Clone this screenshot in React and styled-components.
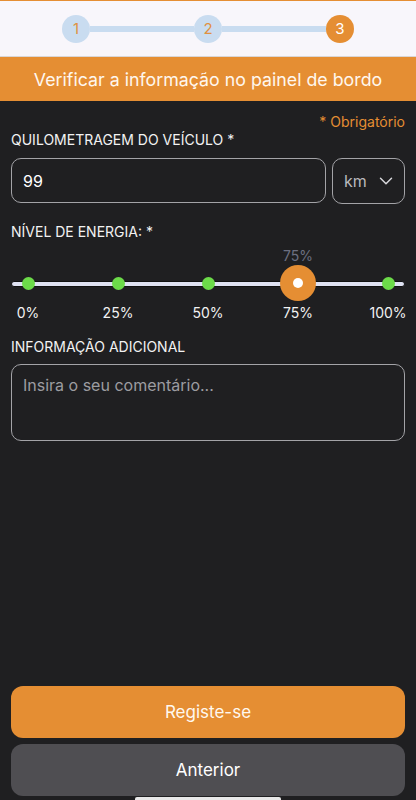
import React from 'react';
import styled, { createGlobalStyle } from 'styled-components';
import { ChevronDown } from 'lucide-react';

const GlobalStyle = createGlobalStyle`
  * { box-sizing: border-box; }
  body {
    margin: 0;
    background: #1f1f21;
    font-family: Inter, 'Noto Sans', sans-serif;
  }
`;

const ORANGE = '#e58e33';

const Page = styled.div`
  position: relative;
  min-height: 800px;
  display: flex;
  flex-direction: column;
  background: #1f1f21;
  color: #f4f4f4;
`;

const Stepper = styled.div`
  height: 57px;
  display: flex;
  align-items: center;
  padding: 0 62px;
  background: #f8f6fb;
  border-top: 1px solid ${ORANGE};
  border-bottom: 1px solid #d9d6d6;
`;

const StepDot = styled.div`
  width: 28px;
  height: 28px;
  border-radius: 50%;
  flex-shrink: 0;
  display: flex;
  align-items: center;
  justify-content: center;
  font-size: 15px;
  background: ${(p) => (p.$active ? ORANGE : '#c9dcf0')};
  color: ${(p) => (p.$active ? '#ffffff' : '#e09140')};
`;

const Connector = styled.div`
  flex: 1;
  height: 6px;
  background: #c9dcf0;
`;

const Banner = styled.div`
  height: 44px;
  display: flex;
  align-items: center;
  justify-content: center;
  background: ${ORANGE};
  color: #fff7ee;
  font-size: 17.8px;
`;

const Form = styled.div`
  flex: 1;
  display: flex;
  flex-direction: column;
  padding: 12px 11px 0;
`;

const Required = styled.div`
  align-self: flex-end;
  color: ${ORANGE};
  font-size: 14px;
  line-height: 18px;
`;

const Label = styled.div`
  font-size: 14px;
  line-height: 18px;
  color: #f2f2f2;
  margin-top: ${(p) => p.$mt || 0}px;
`;

const Row = styled.div`
  display: flex;
  gap: 6px;
  margin-top: 9px;
`;

const Field = styled.div`
  flex: 1;
  height: 45px;
  border: 1.5px solid #a3a3a7;
  border-radius: 10px;
  display: flex;
  align-items: center;
  padding: 0 11px;
  font-size: 16px;
  color: #ffffff;
`;

const Select = styled.div`
  width: 73px;
  height: 46px;
  border: 1.5px solid #a3a3a7;
  border-radius: 10px;
  display: flex;
  align-items: center;
  justify-content: space-between;
  padding: 0 7px 0 11px;
  font-size: 16px;
  color: #b9b9bd;
`;

const Slider = styled.div`
  position: relative;
  margin-top: 6px;
`;

const Track = styled.div`
  position: absolute;
  left: 0;
  right: 0;
  top: 34px;
  height: 6px;
  border-radius: 3px;
  background: #dfe2f2;
  border: 1px solid #111;
`;

const Ticks = styled.div`
  position: relative;
  display: flex;
  justify-content: space-between;
`;

const Tick = styled.div`
  width: 34px;
  display: flex;
  flex-direction: column;
  align-items: center;
`;

const Value = styled.div`
  height: 18px;
  line-height: 18px;
  font-size: 14px;
  color: #6c6f80;
  white-space: nowrap;
`;

const DotArea = styled.div`
  height: 36px;
  display: flex;
  align-items: center;
  justify-content: center;
`;

const Dot = styled.div`
  width: 13px;
  height: 13px;
  border-radius: 50%;
  background: #6cdb49;
`;

const Thumb = styled.div`
  width: 36px;
  height: 36px;
  border-radius: 50%;
  background: ${ORANGE};
  display: flex;
  align-items: center;
  justify-content: center;

  &::after {
    content: '';
    width: 10px;
    height: 10px;
    border-radius: 50%;
    background: #ffffff;
  }
`;

const TickLabel = styled.div`
  margin-top: 3px;
  font-size: 14px;
  line-height: 18px;
  color: #f2f2f2;
  white-space: nowrap;
`;

const TextArea = styled.div`
  margin-top: 8px;
  height: 77px;
  border: 1.5px solid #a3a3a7;
  border-radius: 10px;
  padding: 10px 11px;
  font-size: 16px;
  color: #9c9ca0;
`;

const Footer = styled.div`
  display: flex;
  flex-direction: column;
  gap: 6px;
  padding: 0 11px 4px;
`;

const Button = styled.div`
  height: 52px;
  border-radius: 12px;
  display: flex;
  align-items: center;
  justify-content: center;
  font-size: 17px;
  background: ${(p) => (p.$primary ? ORANGE : '#4f4e52')};
  color: ${(p) => (p.$primary ? '#fff8ef' : '#ffffff')};
`;

const HomeBar = styled.div`
  position: absolute;
  bottom: 0;
  left: 135px;
  width: 146px;
  height: 3px;
  border-radius: 2px 2px 0 0;
  background: #e8e8e8;
`;

const levels = ['0%', '25%', '50%', '75%', '100%'];
const current = 3;

const App = () => (
  <>
    <GlobalStyle />
    <Page>
      <Stepper>
        <StepDot>1</StepDot>
        <Connector />
        <StepDot>2</StepDot>
        <Connector />
        <StepDot $active>3</StepDot>
      </Stepper>
      <Banner>Verificar a informação no painel de bordo</Banner>

      <Form>
        <Required>* Obrigatório</Required>
        <Label>QUILOMETRAGEM DO VEÍCULO *</Label>
        <Row>
          <Field>99</Field>
          <Select>
            km
            <ChevronDown size={22} strokeWidth={1.6} color="#d8d8dc" />
          </Select>
        </Row>

        <Label $mt={19}>NÍVEL DE ENERGIA: *</Label>
        <Slider>
          <Track />
          <Ticks>
            {levels.map((lvl, i) => (
              <Tick key={lvl}>
                <Value>{i === current ? lvl : ''}</Value>
                <DotArea>{i === current ? <Thumb /> : <Dot />}</DotArea>
                <TickLabel>{lvl}</TickLabel>
              </Tick>
            ))}
          </Ticks>
        </Slider>

        <Label $mt={16}>INFORMAÇÃO ADICIONAL</Label>
        <TextArea>Insira o seu comentário...</TextArea>
      </Form>

      <Footer>
        <Button $primary>Registe-se</Button>
        <Button>Anterior</Button>
      </Footer>
      <HomeBar />
    </Page>
  </>
);

export default App;
